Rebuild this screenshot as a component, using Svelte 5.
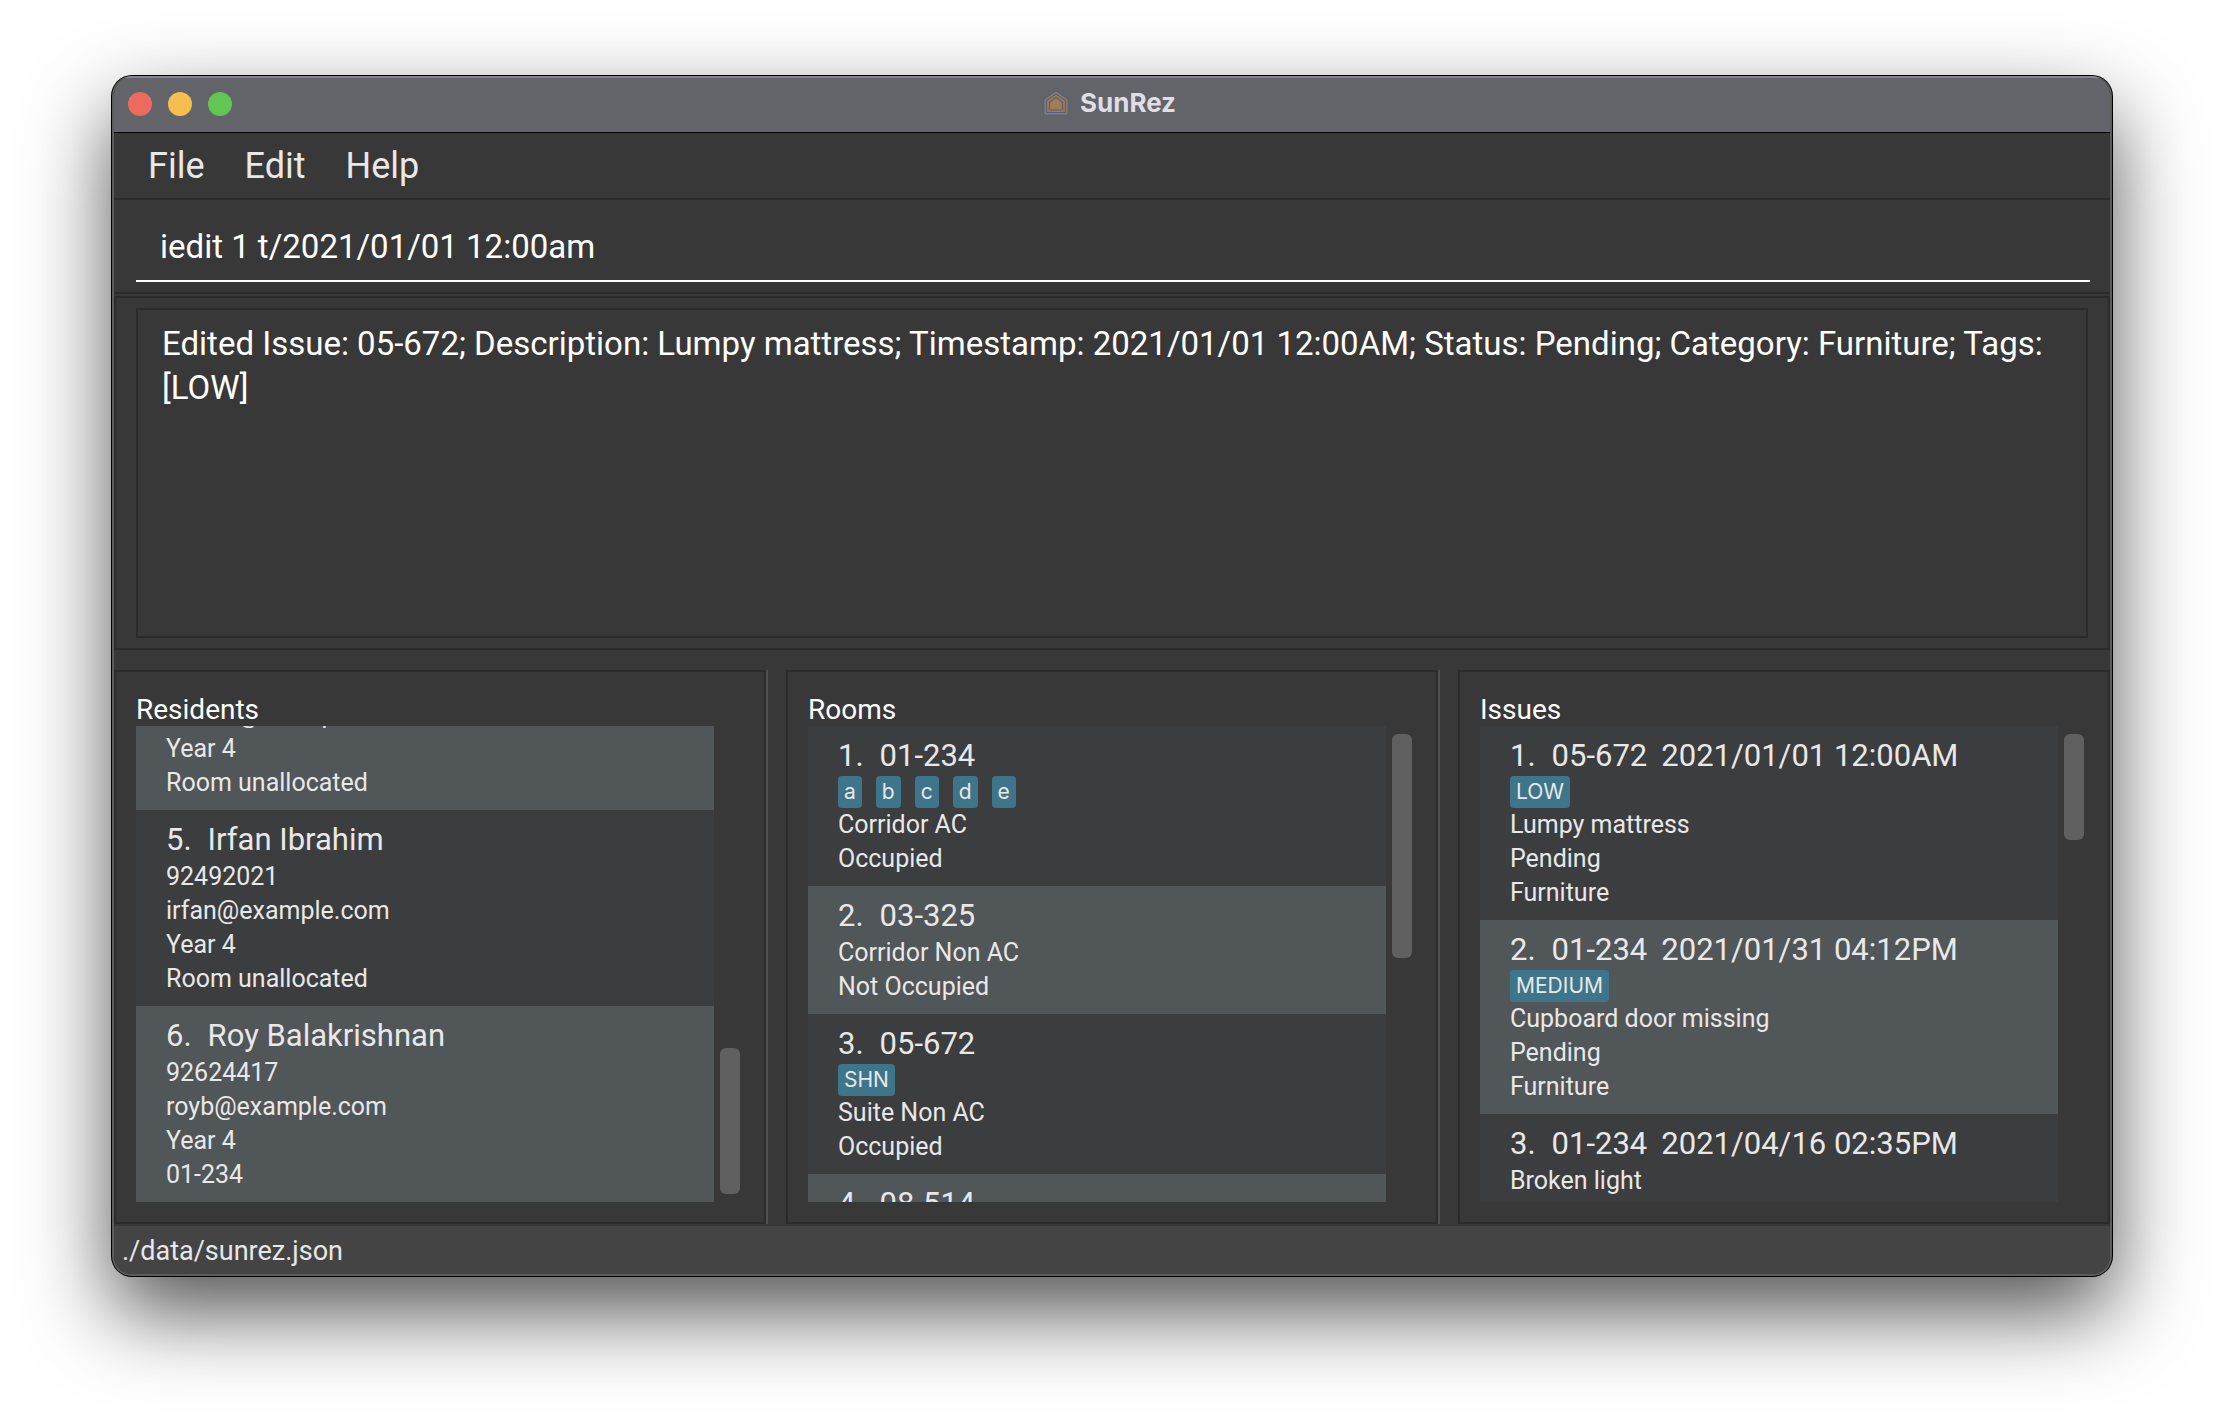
<script>
  const menus = ['File', 'Edit', 'Help'];
  const result =
    'Edited Issue: 05-672; Description: Lumpy mattress; Timestamp: 2021/01/01 12:00AM; Status: Pending; Category: Furniture; Tags: [LOW]';

  let command = $state('iedit 1 t/2021/01/01 12:00am');

  const panels = [
    {
      name: 'Residents',
      atEnd: true,
      thumb: { top: 322, size: 146 },
      rows: [
        { id: 4, title: [], tags: [], lines: ['lidavid@example.com', 'Year 4', 'Room unallocated'] },
        { id: 5, title: ['Irfan Ibrahim'], tags: [], lines: ['92492021', 'irfan@example.com', 'Year 4', 'Room unallocated'] },
        { id: 6, title: ['Roy Balakrishnan'], tags: [], lines: ['92624417', 'royb@example.com', 'Year 4', '01-234'] }
      ]
    },
    {
      name: 'Rooms',
      atEnd: false,
      thumb: { top: 8, size: 224 },
      rows: [
        { id: 1, title: ['01-234'], tags: ['a', 'b', 'c', 'd', 'e'], lines: ['Corridor AC', 'Occupied'] },
        { id: 2, title: ['03-325'], tags: [], lines: ['Corridor Non AC', 'Not Occupied'] },
        { id: 3, title: ['05-672'], tags: ['SHN'], lines: ['Suite Non AC', 'Occupied'] },
        { id: 4, title: ['08-514'], tags: [], lines: [] }
      ]
    },
    {
      name: 'Issues',
      atEnd: false,
      thumb: { top: 8, size: 106 },
      rows: [
        { id: 1, title: ['05-672', '2021/01/01 12:00AM'], tags: ['LOW'], lines: ['Lumpy mattress', 'Pending', 'Furniture'] },
        { id: 2, title: ['01-234', '2021/01/31 04:12PM'], tags: ['MEDIUM'], lines: ['Cupboard door missing', 'Pending', 'Furniture'] },
        { id: 3, title: ['01-234', '2021/04/16 02:35PM'], tags: [], lines: ['Broken light'] }
      ]
    }
  ];
</script>

<div class="desktop">
  <main class="window">
    <header class="titlebar">
      <div class="lights">
        <button class="light close" aria-label="Close"></button>
        <button class="light minimise" aria-label="Minimise"></button>
        <button class="light zoom" aria-label="Zoom"></button>
      </div>
      <h1>
        <svg class="logo" viewBox="0 0 28 28" aria-hidden="true">
          <path d="M14 1.500 26.500 10V26.500H1.500V10Z" fill="#9a7b57" stroke="#56627d" stroke-width="1.800" />
          <path d="M14 5 23.500 11.500V23.500H4.500V11.500Z" fill="none" stroke="#56627d" stroke-width="1.200" />
          <path d="M14 8.500 20.500 13.500V21H7.500V13.500Z" fill="#a07d52" stroke="#56627d" stroke-width="1.200" />
        </svg>
        SunRez
      </h1>
      <div></div>
    </header>

    <nav class="menubar">
      {#each menus as menu}
        <button>{menu}</button>
      {/each}
    </nav>

    <div class="command">
      <input type="text" aria-label="Command" bind:value={command} />
    </div>

    <div class="result">
      <textarea readonly aria-label="Result" value={result}></textarea>
    </div>

    <div class="panels">
      {#each panels as panel}
        <section class="panel">
          <h2>{panel.name}</h2>
          <div class="scroller">
            <ul class:end={panel.atEnd}>
              {#each panel.rows as row}
                <li class:even={row.id % 2 === 0}>
                  {#if row.title.length}
                    <h3>
                      <span class="number">{row.id}.</span>
                      {#each row.title as part}<span>{part}</span>{/each}
                    </h3>
                  {/if}
                  {#if row.tags.length}
                    <div class="tags">
                      {#each row.tags as tag}<span class="tag">{tag}</span>{/each}
                    </div>
                  {/if}
                  {#each row.lines as line}
                    <p>{line}</p>
                  {/each}
                </li>
              {/each}
            </ul>
            <div class="track">
              <div class="thumb" style="margin-top: {panel.thumb.top}px; height: {panel.thumb.size}px"></div>
            </div>
          </div>
        </section>
      {/each}
    </div>

    <footer>./data/sunrez.json</footer>
  </main>
</div>

<style>
  :global(body) {
    background: #fff;
  }

  .desktop {
    box-sizing: border-box;
    height: 100vh;
    padding: 76px 112px 148px;
    font-family: Roboto, 'Liberation Sans', sans-serif;
    color: #e8e8e8;
  }

  .window {
    box-sizing: border-box;
    height: 100%;
    display: flex;
    flex-direction: column;
    overflow: hidden;
    border: 2px solid #5c5c5c;
    border-top: 0;
    border-radius: 20px;
    background: #383838;
    box-shadow:
      0 0 0 1px #000,
      0 36px 84px rgba(0, 0, 0, 0.68);
  }

  button,
  input,
  textarea {
    margin: 0;
    border: 0;
    padding: 0;
    background: none;
    color: inherit;
    font: inherit;
    outline: none;
  }

  h1,
  h2,
  h3,
  p,
  ul {
    margin: 0;
    padding: 0;
    font-weight: 400;
  }

  .titlebar {
    display: grid;
    grid-template-columns: 1fr auto 1fr;
    align-items: center;
    height: 56px;
    flex: none;
    padding: 0 14px;
    background: #63646a;
    border-bottom: 1px solid #000;
    box-shadow: inset 0 2px #85868b;
  }

  .lights {
    display: flex;
    gap: 16px;
  }

  .light {
    width: 24px;
    height: 24px;
    border-radius: 50%;
  }

  .close {
    background: #ed6a5f;
  }

  .minimise {
    background: #f5bf50;
  }

  .zoom {
    background: #62c655;
  }

  h1 {
    display: flex;
    align-items: center;
    gap: 10px;
    padding: 0 6px 2px 0;
    font-family: Inter, 'Liberation Sans', sans-serif;
    font-size: 26px;
    line-height: 32px;
    font-weight: 700;
    color: #dedee4;
  }

  .logo {
    width: 28px;
    height: 28px;
  }

  .menubar {
    display: flex;
    gap: 40px;
    flex: none;
    padding: 0 34px;
    border-bottom: 2px solid #2b2b2b;
  }

  .menubar button {
    height: 65px;
    padding-top: 1px;
    font-size: 36px;
    line-height: 64px;
  }

  .command {
    flex: none;
    padding: 12px 20px 10px 22px;
    border-bottom: 2px solid #2b2b2b;
  }

  .command input {
    box-sizing: border-box;
    display: block;
    width: 100%;
    height: 70px;
    padding: 0 24px;
    border-bottom: 2px solid #fff;
    font-size: 33px;
    color: #fff;
  }

  .result {
    flex: none;
    margin-top: 2px;
    padding: 10px 20px;
    border: 2px solid #2b2b2b;
  }

  .result textarea {
    box-sizing: border-box;
    display: block;
    width: 100%;
    height: 330px;
    padding: 12px 24px;
    border: 2px solid #2b2b2b;
    resize: none;
    font-size: 33px;
    line-height: 44px;
    color: #fff;
  }

  .panels {
    flex: 1;
    min-height: 0;
    display: grid;
    grid-template-columns: repeat(3, minmax(0, 1fr));
    gap: 20px;
    padding: 20px 0 2px;
  }

  .panel {
    display: flex;
    flex-direction: column;
    min-height: 0;
    padding: 22px 20px 20px;
    border: 2px solid #2b2b2b;
    box-shadow: 2px 0 #505050;
  }

  h2 {
    flex: none;
    font-size: 28px;
    line-height: 32px;
    color: #fff;
  }

  .scroller {
    flex: 1;
    min-height: 0;
    display: flex;
    gap: 6px;
  }

  ul {
    flex: 1;
    min-width: 0;
    display: flex;
    flex-direction: column;
    overflow: hidden;
    list-style: none;
    background: #3c3d3f;
  }

  ul.end {
    justify-content: flex-end;
  }

  .track {
    width: 24px;
  }

  .thumb {
    width: 20px;
    border-radius: 6px;
    background: #606060;
  }

  li {
    flex: none;
    padding: 10px 30px;
    background: #3c3d3f;
  }

  li.even {
    background: #515658;
  }

  h3 {
    display: flex;
    gap: 14px;
    font-size: 31px;
    line-height: 40px;
  }

  .number {
    margin-right: 2px;
  }

  .tags {
    display: flex;
    gap: 14px;
  }

  .tag {
    padding: 0 6px;
    border-radius: 4px;
    background: #3f758a;
    font-family: Inter, 'Liberation Sans', sans-serif;
    font-size: 21px;
    line-height: 32px;
  }

  p {
    font-size: 25px;
    line-height: 34px;
  }

  footer {
    flex: none;
    padding: 2px 8px 0;
    background: #444;
    font-size: 27px;
    line-height: 46px;
  }
</style>
